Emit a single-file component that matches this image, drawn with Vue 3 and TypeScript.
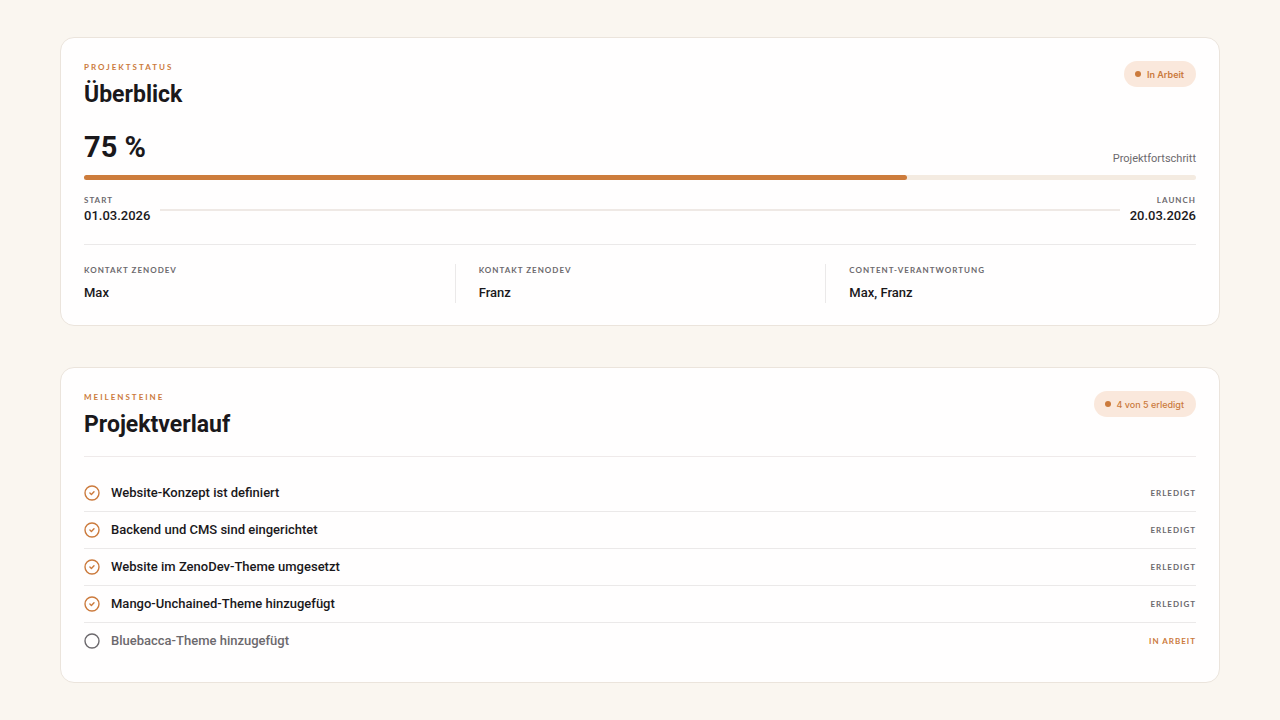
<script setup lang="ts">
interface Contact {
  role: string
  name: string
}

interface Milestone {
  title: string
  done: boolean
}

const progress = { label: '75 %', filled: 74 }

const contacts: Contact[] = [
  { role: 'Kontakt ZenoDev', name: 'Max' },
  { role: 'Kontakt ZenoDev', name: 'Franz' },
  { role: 'Content-Verantwortung', name: 'Max, Franz' },
]

const milestones: Milestone[] = [
  { title: 'Website-Konzept ist definiert', done: true },
  { title: 'Backend und CMS sind eingerichtet', done: true },
  { title: 'Website im ZenoDev-Theme umgesetzt', done: true },
  { title: 'Mango-Unchained-Theme hinzugefügt', done: true },
  { title: 'Bluebacca-Theme hinzugefügt', done: false },
]

const doneCount = milestones.filter((m) => m.done).length
</script>

<template>
  <main class="page">
    <section class="card" aria-labelledby="overview-title">
      <header class="head">
        <div>
          <p class="eyebrow">Projektstatus</p>
          <h2 id="overview-title" class="title">Überblick</h2>
        </div>
        <span class="badge badge-strong"><i class="dot"></i>In Arbeit</span>
      </header>

      <div class="figures">
        <strong class="percent">{{ progress.label }}</strong>
        <span id="progress-label" class="caption">Projektfortschritt</span>
      </div>
      <div
        class="track"
        role="progressbar"
        aria-labelledby="progress-label"
        :aria-valuenow="75"
        aria-valuemin="0"
        aria-valuemax="100"
      >
        <div class="fill" :style="{ width: progress.filled + '%' }"></div>
      </div>

      <div class="dates">
        <div>
          <p class="label">Start</p>
          <time class="value" datetime="2026-03-01">01.03.2026</time>
        </div>
        <span class="span-line"></span>
        <div class="launch">
          <p class="label">Launch</p>
          <time class="value" datetime="2026-03-20">20.03.2026</time>
        </div>
      </div>

      <dl class="contacts">
        <div v-for="(contact, i) in contacts" :key="i" class="contact">
          <dt class="label">{{ contact.role }}</dt>
          <dd class="value">{{ contact.name }}</dd>
        </div>
      </dl>
    </section>

    <section class="card" aria-labelledby="milestones-title">
      <header class="head">
        <div>
          <p class="eyebrow">Meilensteine</p>
          <h2 id="milestones-title" class="title">Projektverlauf</h2>
        </div>
        <span class="badge"><i class="dot"></i>{{ doneCount }} von {{ milestones.length }} erledigt</span>
      </header>

      <ol class="milestones">
        <li v-for="m in milestones" :key="m.title" class="milestone" :class="{ open: !m.done }">
          <svg class="icon" viewBox="0 0 16 16" aria-hidden="true">
            <circle cx="8" cy="8" r="7" />
            <path v-if="m.done" d="M5.9 8.1l1.5 1.4 2.6-2.7" />
          </svg>
          <span class="name">{{ m.title }}</span>
          <span class="state">{{ m.done ? 'Erledigt' : 'In Arbeit' }}</span>
        </li>
      </ol>
    </section>
  </main>
</template>

<style>
body {
  margin: 0;
  background: #faf6f0;
}
</style>

<style scoped>
.page {
  display: flex;
  flex-direction: column;
  gap: 41px;
  padding: 37px 60px 36px;
  font-family: Roboto, "Liberation Sans", sans-serif;
  color: #1a181b;
}

p,
h2,
dl,
dd,
ol {
  margin: 0;
  padding: 0;
}

.card {
  padding: 23px 23px 22px;
  background: #fffefe;
  border: 1px solid #ebe4dc;
  border-radius: 14px;
}

.head {
  display: flex;
  justify-content: space-between;
  align-items: flex-start;
}

.eyebrow,
.label,
.state {
  font-family: Lato, Roboto, sans-serif;
  font-size: 8px;
  font-weight: 700;
  line-height: 12px;
  letter-spacing: 1px;
  text-transform: uppercase;
  color: #6c696d;
}

.eyebrow {
  letter-spacing: 2px;
  color: #cb7a3c;
}

.title {
  margin-top: 6px;
  font-size: 23px;
  line-height: 32px;
  font-weight: 700;
}

.badge {
  display: inline-flex;
  align-items: center;
  gap: 6px;
  height: 26px;
  padding: 0 12px 0 11px;
  border-radius: 13px;
  background: #fae8dc;
  color: #cb7a3c;
  font-family: Inter, Roboto, sans-serif;
  font-size: 9px;
  font-weight: 500;
  white-space: nowrap;
}

.badge-strong {
  font-weight: 600;
}

.dot {
  width: 6px;
  height: 6px;
  border-radius: 50%;
  background: #cb7a3c;
}

.figures {
  display: flex;
  justify-content: space-between;
  align-items: flex-end;
  margin-top: 18px;
}

.percent {
  font-size: 29px;
  line-height: 36px;
  font-weight: 700;
}

.caption {
  font-size: 11px;
  line-height: 12px;
  color: #6c696d;
}

.track {
  height: 5px;
  margin-top: 10px;
  border-radius: 3px;
  background: #f4ebe1;
}

.fill {
  height: 100%;
  border-radius: 3px;
  background: #cd7c3c;
}

.dates {
  display: flex;
  align-items: center;
  gap: 10px;
  margin-top: 14px;
  padding-bottom: 18px;
  border-bottom: 1px solid #ebe9e9;
}

.span-line {
  flex: 1;
  height: 2px;
  background: #efe9e5;
}

.launch {
  text-align: right;
}

.value {
  display: block;
  font-size: 13px;
  line-height: 20px;
  font-weight: 500;
}

.contacts {
  display: grid;
  grid-template-columns: repeat(3, 1fr);
  margin-top: 19px;
}

.contact {
  padding-left: 23px;
  border-left: 1px solid #ebe9e9;
}

.contact:first-child {
  padding-left: 0;
  border-left: 0;
}

.contact .value {
  margin-top: 7px;
}

.milestones {
  margin-top: 15px;
  padding-top: 18px;
  border-top: 1px solid #efeaea;
  list-style: none;
}

.milestone {
  display: flex;
  align-items: center;
  gap: 11px;
  height: 36px;
  border-bottom: 1px solid #ebe9e9;
}

.milestone:last-child {
  border-bottom-color: transparent;
}

.icon {
  width: 16px;
  height: 16px;
  fill: none;
  stroke: #cb7a3c;
  stroke-width: 1.4;
  stroke-linecap: round;
  stroke-linejoin: round;
}

.name {
  flex: 1;
  font-size: 13px;
  line-height: 20px;
  font-weight: 500;
}

.open .icon {
  stroke: #6c696d;
}

.open .name {
  color: #6c696d;
}

.open .state {
  color: #cb7a3c;
}
</style>
